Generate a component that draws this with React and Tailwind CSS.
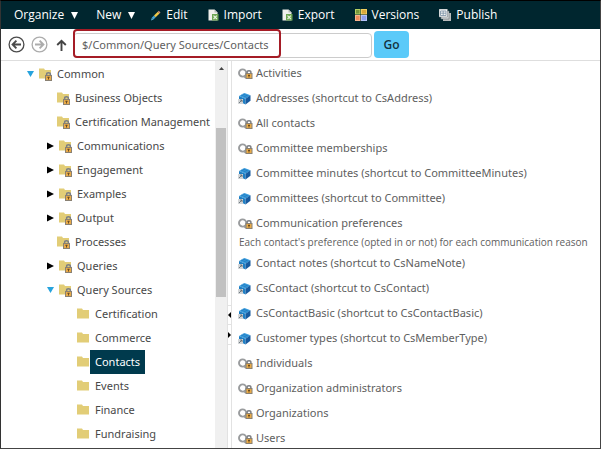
import React, { useState } from 'react';

const TREE = [
  { name: 'Common', level: 0, state: 'open', locked: true },
  { name: 'Business Objects', level: 1, locked: true },
  { name: 'Certification Management', level: 1, locked: true },
  { name: 'Communications', level: 1, state: 'closed', locked: true },
  { name: 'Engagement', level: 1, state: 'closed', locked: true },
  { name: 'Examples', level: 1, state: 'closed', locked: true },
  { name: 'Output', level: 1, state: 'closed', locked: true },
  { name: 'Processes', level: 1, locked: true },
  { name: 'Queries', level: 1, state: 'closed', locked: true },
  { name: 'Query Sources', level: 1, state: 'open', locked: true },
  { name: 'Certification', level: 2 },
  { name: 'Commerce', level: 2 },
  { name: 'Contacts', level: 2 },
  { name: 'Events', level: 2 },
  { name: 'Finance', level: 2 },
  { name: 'Fundraising', level: 2 },
];

const DOCUMENTS = [
  { name: 'Activities', type: 'query' },
  { name: 'Addresses (shortcut to CsAddress)', type: 'shortcut' },
  { name: 'All contacts', type: 'query' },
  { name: 'Committee memberships', type: 'query' },
  { name: 'Committee minutes (shortcut to CommitteeMinutes)', type: 'shortcut' },
  { name: 'Committees (shortcut to Committee)', type: 'shortcut' },
  {
    name: 'Communication preferences',
    type: 'query',
    description: "Each contact's preference (opted in or not) for each communication reason",
  },
  { name: 'Contact notes (shortcut to CsNameNote)', type: 'shortcut' },
  { name: 'CsContact (shortcut to CsContact)', type: 'shortcut' },
  { name: 'CsContactBasic (shortcut to CsContactBasic)', type: 'shortcut' },
  { name: 'Customer types (shortcut to CsMemberType)', type: 'shortcut' },
  { name: 'Individuals', type: 'query' },
  { name: 'Organization administrators', type: 'query' },
  { name: 'Organizations', type: 'query' },
  { name: 'Users', type: 'query' },
];

const Lock = ({ x, y }) => (
  <g transform={`translate(${x} ${y})`}>
    <path d="M1.6 4V2.4Q1.6.8 3.5.8t1.9 1.6V4" fill="none" stroke="#7d8085" strokeWidth="1.5" />
    <rect x=".5" y="3.5" width="6" height="5" fill="#e9ab49" stroke="#8a8173" />
    <path d="M2.5 4.8h2v1.1H4v1.5H3V5.9h-.5z" fill="#6b4d22" />
  </g>
);

const FolderIcon = ({ locked }) => (
  <svg className="shrink-0" width="14" height="14" viewBox="0 0 14 14" aria-hidden="true">
    <path d="M0 1.5h5L6 3h6v8.5H0z" fill="#e2cd77" />
    {locked && <Lock x={6} y={5} />}
  </svg>
);

const QueryIcon = () => (
  <svg className="shrink-0" width="15" height="14" viewBox="0 0 15 14" aria-hidden="true">
    <circle cx="4.6" cy="6" r="3.6" fill="none" stroke="#9a9c9e" strokeWidth="1.9" />
    <path d="M6 9l1.8 1.8" stroke="#9a9c9e" strokeWidth="1.8" />
    <Lock x={7.5} y={3} />
  </svg>
);

const ShortcutIcon = () => (
  <svg className="shrink-0" width="15" height="14" viewBox="0 0 15 14" aria-hidden="true">
    <path d="M1 4L6.5 1l6 2.3L7.5 6.8z" fill="#3a9cdd" />
    <path d="M1 4l6.5 2.8v5.7L1 9.5z" fill="#1e7fc4" />
    <path d="M7.5 6.8l5-3.5v5.4l-5 3.8z" fill="#175a9f" />
    <path d="M3 3l6.3 2.5M4.8 2l6.1 2.4" stroke="#1b74b9" strokeWidth=".7" />
    <rect x="0" y="7" width="5" height="5" fill="#d3d6d8" />
    <path d="M1 11l2.8-2.8M2 8h2v2" fill="none" stroke="#56616a" strokeWidth=".8" />
  </svg>
);

const PencilIcon = () => (
  <svg width="11" height="11" viewBox="0 0 11 11" aria-hidden="true">
    <path d="M1 10.5l.8-2.8 1.7 1.7z" fill="#55b2de" />
    <path d="M1.8 7.7L4 5.5l1.7 1.7-2.2 2.2z" fill="#46a5d6" />
    <path d="M4 5.5l3.8-3.8 1.7 1.7-3.8 3.8z" fill="#f0c846" />
    <path d="M7.8 1.7l1-1 1.7 1.7-1 1z" fill="#d98c77" />
  </svg>
);

const TransferIcon = () => (
  <svg width="11" height="12" viewBox="0 0 11 12" aria-hidden="true">
    <path d="M.5.5h6l3 3v8h-9z" fill="#f0f0ec" />
    <path d="M6.5.5v3h3" fill="#b7bcb9" />
    <rect x="4" y="5" width="6.5" height="6.5" fill="#6da552" />
    <path d="M5.5 6.6l3.4 3.4M8.9 6.6L5.5 10" stroke="#e8f3df" strokeWidth="1.1" />
  </svg>
);

const VersionsIcon = () => (
  <svg width="12" height="12" viewBox="0 0 12 12" aria-hidden="true">
    <rect x=".5" y=".5" width="4.5" height="4.5" fill="#75943c" stroke="#b5cf63" />
    <rect x="6.5" y=".5" width="5" height="4.5" fill="#d9a83b" stroke="#f1cc5e" />
    <rect x=".5" y="6.5" width="4.5" height="5" fill="#ee8d5d" stroke="#f9b38f" />
    <rect x="6.5" y="6.5" width="5" height="5" fill="#8d9fee" stroke="#b2c2f8" />
  </svg>
);

const PublishIcon = () => (
  <svg width="12" height="12" viewBox="0 0 12 12" aria-hidden="true">
    <path d="M4 4h8v8H4z" fill="#b9bcbd" />
    <path d="M2 2h8v8H2z" fill="#d7dadb" stroke="#6d777c" strokeWidth=".6" />
    <path d="M0 0h8.5v8H0z" fill="#f5f6f6" stroke="#6d777c" strokeWidth=".5" />
    <path d="M1.5 2h5.5v4.5H1.5zM4.2 2v4.5M1.5 4.2H7" fill="none" stroke="#7891a5" strokeWidth=".8" />
  </svg>
);

const Caret = () => (
  <svg width="7" height="7" viewBox="0 0 7 7" aria-hidden="true">
    <path d="M0 0h7L3.5 7z" fill="#fff" />
  </svg>
);

const RoundArrow = ({ color, flip }) => (
  <svg width="17" height="17" viewBox="0 0 17 17" fill="none" stroke={color} aria-hidden="true">
    <circle cx="8.5" cy="8.5" r="7.4" strokeWidth="1.3" />
    <path
      d={flip ? 'M4 8.5h8.3M8.6 4.7l3.8 3.8-3.8 3.8' : 'M13 8.5H4.7M8.4 4.7L4.6 8.5l3.8 3.8'}
      strokeWidth="1.9"
    />
  </svg>
);

const Toggle = ({ name, state, onClick }) => (
  <button type="button" aria-label={`Toggle ${name}`} onClick={onClick} className="w-3 shrink-0">
    <svg width="7" height="8" viewBox="0 0 7 8" aria-hidden="true">
      {state === 'open' ? (
        <path d="M0 1h7L3.5 7z" fill="#27a3dd" />
      ) : (
        <path d="M0 .5L7 4 0 7.5z" fill="#000" />
      )}
    </svg>
  </button>
);

const toolButton = 'flex items-center whitespace-nowrap';

const Toolbar = () => (
  <header className="flex h-7 shrink-0 items-center bg-[#00262f] pl-[13px] text-[12px] text-white">
    <button type="button" className={`${toolButton} mr-[18px] gap-[7px]`}>Organize <Caret /></button>
    <button type="button" className={`${toolButton} mr-[15px] gap-[7px]`}>New <Caret /></button>
    <button type="button" className={`${toolButton} mr-5 gap-[5px]`}><PencilIcon /> Edit</button>
    <button type="button" className={`${toolButton} mr-5 gap-[5px]`}><TransferIcon /> Import</button>
    <button type="button" className={`${toolButton} mr-5 gap-[5px]`}><TransferIcon /> Export</button>
    <button type="button" className={`${toolButton} mr-5 gap-[5px]`}><VersionsIcon /> Versions</button>
    <button type="button" className={`${toolButton} gap-[5px]`}><PublishIcon /> Publish</button>
  </header>
);

const AddressBar = () => {
  const [path, setPath] = useState('$/Common/Query Sources/Contacts');

  return (
    <form
      className="flex h-8 shrink-0 items-center border-b border-[#dedede] pl-[7px]"
      onSubmit={(e) => e.preventDefault()}
    >
      <button type="button" aria-label="Back" className="mr-[6px]"><RoundArrow color="#4b4b4b" /></button>
      <button type="button" aria-label="Forward" className="mr-2"><RoundArrow color="#acacac" flip /></button>
      <button type="button" aria-label="Up one level" className="mr-[6px]">
        <svg width="11" height="12" viewBox="0 0 11 12" fill="none" stroke="#444" strokeWidth="1.9" aria-hidden="true">
          <path d="M5.5 12V1.8M1.2 6l4.3-4.2L9.8 6" />
        </svg>
      </button>
      <div className="relative mr-[2px] w-[299px]">
        <input
          aria-label="Path"
          value={path}
          onChange={(e) => setPath(e.target.value)}
          className="h-[25px] w-full rounded-[4px] border border-[#ccc] bg-white px-2 pb-[2px] font-['Noto_Sans',sans-serif] text-[11px] text-[#606060] outline-none"
        />
        {/* Callout around the current path */}
        <div className="pointer-events-none absolute -top-[2px] left-0 h-[29px] w-[208px] rounded-[4px] border-2 border-[#a51c26]" />
      </div>
      <button type="submit" className="h-[27px] w-[35px] rounded-[4px] bg-[#5bcaf9] text-[12px] font-semibold text-[#15323f]">
        Go
      </button>
    </form>
  );
};

const INDENT = ['pl-[26px]', 'pl-[46px]', 'pl-[76px]'];

const TreeRow = ({ node, selected, onSelect }) => {
  const indent = node.level === 1 && !node.state ? 'pl-[56px]' : INDENT[node.level];

  return (
    <li className={`flex h-6 items-center ${indent}`}>
      {node.state && <Toggle name={node.name} state={node.state} onClick={onSelect} />}
      <FolderIcon locked={node.locked} />
      <button
        type="button"
        onClick={onSelect}
        className={`h-6 whitespace-nowrap ${node.level === 2 ? '-ml-px px-[5px]' : 'px-1'} ${
          selected ? 'bg-[#003a4d] text-white' : ''
        }`}
      >
        {node.name}
      </button>
    </li>
  );
};

const Scrollbar = () => (
  <div className="flex w-3 shrink-0 flex-col items-center bg-[#f0f0f0]" aria-hidden="true">
    <svg className="mt-[5px] mb-[58px] shrink-0" width="5" height="4" viewBox="0 0 5 4">
      <path d="M0 4L2.5 1 5 4z" fill="#444" />
    </svg>
    <div className="h-[169px] w-[10px] shrink-0 bg-[#c1c1c1]" />
  </div>
);

const Splitter = () => (
  <div className="flex w-[5px] shrink-0 flex-col border-x border-[#e2e2e2] pt-[244px]">
    <button type="button" aria-label="Collapse tree" className="flex h-5 items-center border-y border-[#e2e2e2]">
      <svg width="3" height="6" viewBox="0 0 3 6"><path d="M3 0v6L0 3z" fill="#000" /></svg>
    </button>
    <button type="button" aria-label="Expand tree" className="flex h-5 items-center border-b border-[#e2e2e2]">
      <svg width="3" height="6" viewBox="0 0 3 6"><path d="M0 0v6l3-3z" fill="#000" /></svg>
    </button>
  </div>
);

const DocumentRow = ({ doc }) => (
  <li>
    <a href="#" className="flex h-[25px] items-center gap-[3px] whitespace-nowrap">
      {doc.type === 'query' ? <QueryIcon /> : <ShortcutIcon />}
      {doc.name}
    </a>
    {doc.description && (
      <p className="h-[15px] pl-px font-['Open_Sans',sans-serif] text-[10px] leading-[13px] whitespace-nowrap">
        {doc.description}
      </p>
    )}
  </li>
);

export default function App() {
  const [selected, setSelected] = useState('Contacts');

  return (
    <div className="flex h-screen flex-col overflow-hidden border border-t-black border-r-[#444] border-b-[#444] border-l-[#333] bg-white font-['Open_Sans',sans-serif]">
      <Toolbar />
      <AddressBar />
      <main className="flex min-h-0 flex-1 font-['Noto_Sans',sans-serif] text-[11px]">
        <nav aria-label="Folders" className="w-[214px] shrink-0 overflow-hidden pt-px text-[#484848]">
          <ul>
            {TREE.map((node) => (
              <TreeRow
                key={node.name}
                node={node}
                selected={selected === node.name}
                onSelect={() => setSelected(node.name)}
              />
            ))}
          </ul>
        </nav>
        <Scrollbar />
        <Splitter />
        <section className="min-w-0 flex-1 overflow-hidden pl-[6px] text-[#606060]">
          <ul>
            {DOCUMENTS.map((doc) => (
              <DocumentRow key={doc.name} doc={doc} />
            ))}
          </ul>
        </section>
      </main>
    </div>
  );
}
